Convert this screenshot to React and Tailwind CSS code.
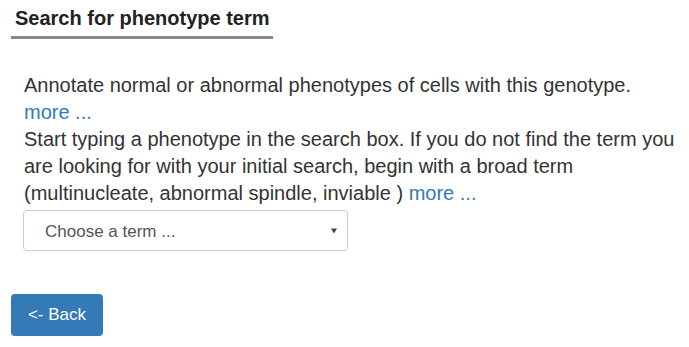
import { useState } from "react";

export default function App() {
    const [term, setTerm] = useState("");

    return (
        <div className="min-h-[347px] bg-white pl-[11px] pt-[6px] text-[#333]" style={{ fontFamily: '"Liberation Sans", Arial, sans-serif' }}>
            <div className="w-[262px] border-b-[3px] border-[#888] pl-[4px] pb-[6px]">
                <h4 className="text-[20px] leading-[24px] font-bold text-[#222]">Search for phenotype term</h4>
            </div>

            <div className="pl-[13px] pr-[8px] pt-[33px] text-[20px] leading-[27px]">
                <p>
                    Annotate normal or abnormal phenotypes of cells with this genotype.{" "}
                    <a href="#" className="text-[#337ab7]">more ...</a>
                </p>
                <p>
                    Start typing a phenotype in the search box. If you do not find the term you are looking for with your initial search, begin with a broad term (multinucleate, abnormal spindle, inviable ){" "}
                    <a href="#" className="text-[#337ab7]">more ...</a>
                </p>
            </div>

            <div className="ml-[12px] mt-[3px] relative w-[325px] h-[41px]">
                <select
                    value={term}
                    onChange={(e) => setTerm(e.target.value)}
                    className="appearance-none w-full h-full border border-[#ccc] rounded-[4px] bg-white pl-[21px] pt-[2px] text-[17px] text-[#555] outline-none"
                >
                    <option value="">Choose a term ...</option>
                </select>
                {/* caret */}
                <svg className="pointer-events-none absolute left-[308px] top-[18px]" width="6" height="6" viewBox="0 0 6 6">
                    <path d="M0 0.5 H6 L3 5.5 Z" fill="#444" />
                </svg>
            </div>

            <button className="mt-[43px] h-[42px] w-[92px] rounded-[4px] bg-[#337ab7] text-white text-[17px] hover:bg-[#286090]">
                &lt;- Back
            </button>
        </div>
    );
}
